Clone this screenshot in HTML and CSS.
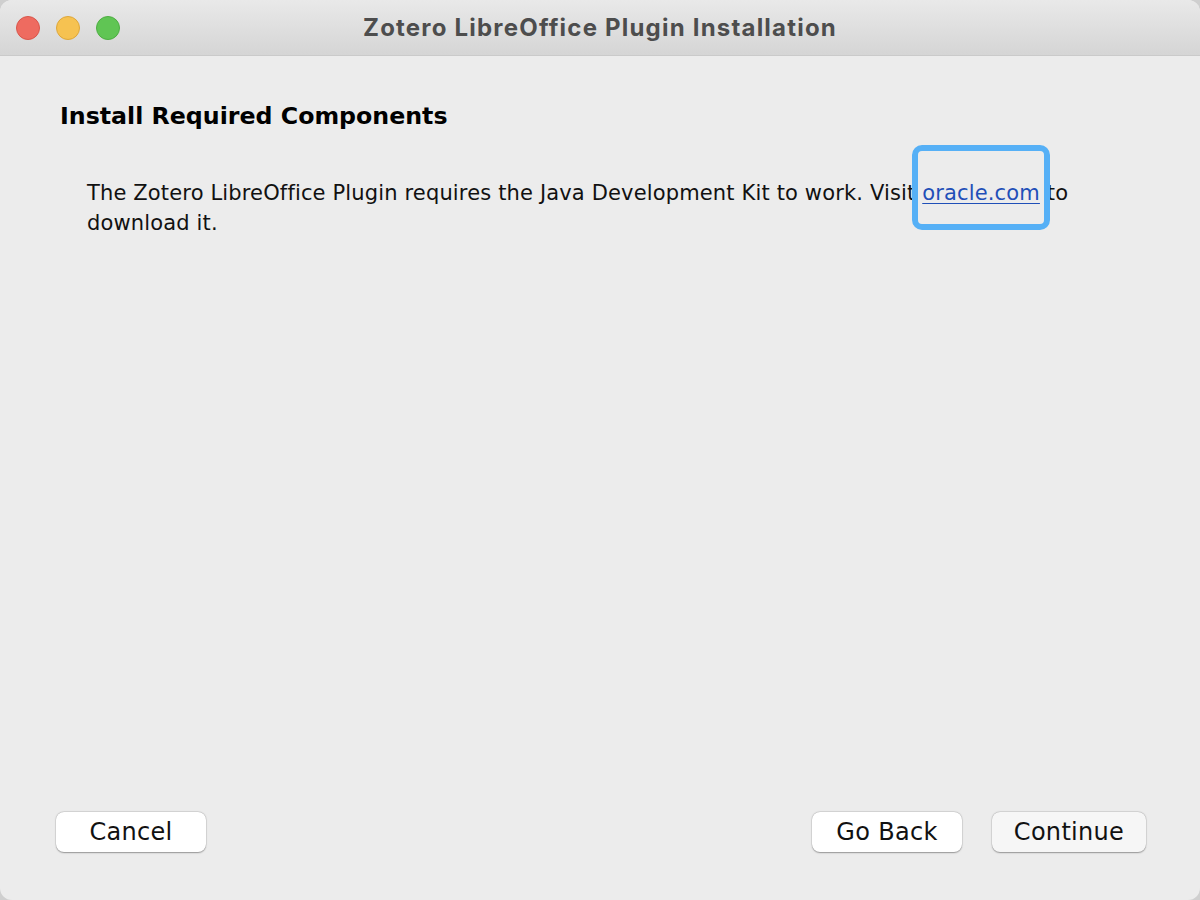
FILE: index.html
```html
<!DOCTYPE html>
<html>
<head>
<meta charset="utf-8">
<link rel="stylesheet" href="styles.css">
</head>
<body>
<div class="window">
  <div class="titlebar">
    <div class="lights">
      <span class="light red"></span>
      <span class="light yellow"></span>
      <span class="light green"></span>
    </div>
    <div class="title">Zotero LibreOffice Plugin Installation</div>
  </div>
  <div class="content">
    <h1 class="heading">Install Required Components</h1>
    <p class="message">The Zotero LibreOffice Plugin requires the Java Development Kit to work. Visit <a class="link" href="#">oracle.com</a> to download it.</p>
  </div>
  <div class="footer">
    <button class="btn">Cancel</button>
    <div class="right">
      <button class="btn">Go Back</button>
      <button class="btn btn-default">Continue</button>
    </div>
  </div>
</div>
</body>
</html>
```

FILE: styles.css
```css
html, body {
  margin: 0;
  padding: 0;
  width: 1200px;
  height: 900px;
  background: #cfcfcf;
  overflow: hidden;
}
.window {
  width: 1200px;
  height: 900px;
  background: #ececec;
  border-radius: 12px;
  overflow: hidden;
  display: flex;
  flex-direction: column;
  font-family: "DejaVu Sans", sans-serif;
}
.titlebar {
  position: relative;
  height: 55px;
  flex: none;
  background: linear-gradient(to bottom, #e9e9e9, #d5d5d5);
  border-bottom: 1px solid #cacaca;
  display: flex;
  align-items: center;
  justify-content: center;
}
.lights {
  position: absolute;
  left: 16px;
  top: 16px;
  display: flex;
  gap: 16px;
}
.light {
  width: 24px;
  height: 24px;
  border-radius: 50%;
  box-sizing: border-box;
}
.red { background: #ee6b60; border: 1px solid #d9564b; }
.yellow { background: #f6c251; border: 1px solid #dea73a; }
.green { background: #60c554; border: 1px solid #4dae42; }
.title {
  font-family: Inter, "Liberation Sans", sans-serif;
  font-weight: bold;
  font-size: 24px;
  letter-spacing: 1.2px;
  color: #4d4d4d;
}
.content {
  flex: 1;
  padding: 45px 100px 0 60px;
}
.heading {
  margin: 0;
  font-size: 23.7px;
  font-weight: bold;
  color: #000;
  line-height: 30px;
}
.message {
  margin: 47px 0 0 27px;
  font-size: 21px;
  letter-spacing: 0.15px;
  line-height: 30px;
  color: #111;
}
.link {
  position: relative;
  color: #1f4fb8;
  text-decoration: underline;
  text-underline-offset: 3px;
  text-decoration-thickness: 1px;
}
.link::after {
  content: "";
  position: absolute;
  left: -10px;
  right: -10px;
  top: -36px;
  bottom: -25px;
  border: 6px solid #56b0f6;
  border-radius: 10px;
}
.footer {
  flex: none;
  display: flex;
  justify-content: space-between;
  padding: 0 54px 48px 56px;
}
.right {
  display: flex;
  gap: 30px;
}
.btn {
  font-family: "DejaVu Sans", sans-serif;
  font-size: 24px;
  letter-spacing: 0.3px;
  color: #111;
  background: #fff;
  border: none;
  border-radius: 8px;
  height: 40px;
  width: 150px;
  padding: 0;
  box-shadow: 0 0.5px 1.5px rgba(0,0,0,0.35), 0 0 0 0.5px rgba(0,0,0,0.08);
}
.btn-default {
  background: #f6f6f6;
  width: 154px;
}
```
